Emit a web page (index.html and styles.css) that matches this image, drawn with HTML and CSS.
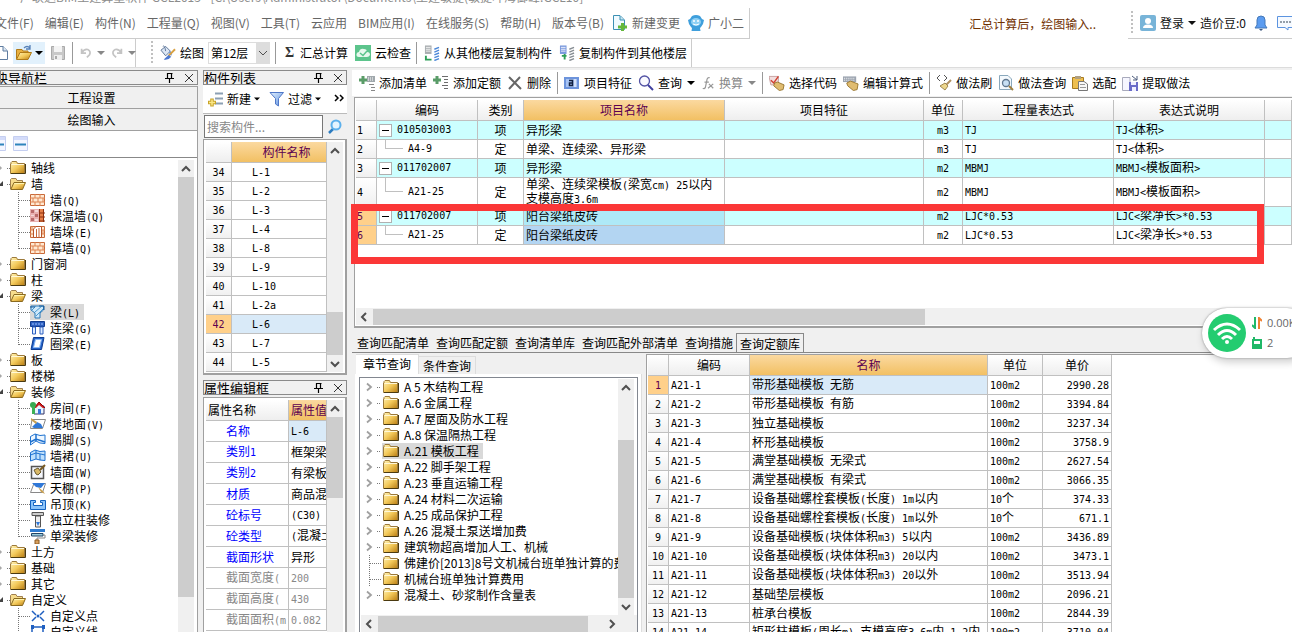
FILE: index.html
```html
<!DOCTYPE html>
<html lang="zh-CN">
<head>
<meta charset="utf-8">
<title>广联达BIM土建算量软件 GCL2013</title>
<link rel="stylesheet" href="styles.css">
</head>
<body>
<svg class="defs" aria-hidden="true">
  <defs>
    <linearGradient id="gold" x1="0" y1="0" x2="1" y2="1"><stop offset="0" stop-color="#fff3b8"/><stop offset=".5" stop-color="#f3c95a"/><stop offset="1" stop-color="#b87c12"/></linearGradient>
    <linearGradient id="blue" x1="0" y1="0" x2="1" y2="1"><stop offset="0" stop-color="#e4f2ff"/><stop offset="1" stop-color="#5a8fe0"/></linearGradient>
  </defs>
  <symbol id="i-folder" viewBox="0 0 16 16"><path d="M1 4V2.500L2 1.500H6.500L7.500 3.500H14.500V13.500H.500V4z" fill="url(#gold)" stroke="#9c7a3c"/><path d="M1.500 4.500H14" stroke="#fff8d8"/><path d="M1 13.500H15.500V4" fill="none" stroke="#4a3a10"/></symbol>
  <symbol id="i-folderopen" viewBox="0 0 16 16"><path d="M.500 13V3.500L1.500 2.500H6L7 4.500H12.500V7" fill="#f7dc8c" stroke="#a08050"/><path d="M.800 13.500L4 6.500H15.500L12.500 13.500z" fill="url(#gold)" stroke="#8a6a20"/><path d="M4.500 7.500H14" stroke="#fff4b0"/></symbol>
  <symbol id="i-closed" viewBox="0 0 10 16"><path d="M-2 5L1 8L-2 11" fill="none" stroke="#a8a8a8" stroke-width="1.500"/><path d="M7 8.500H10" stroke="#777" stroke-dasharray="1 1"/></symbol>
  <symbol id="i-opened" viewBox="0 0 10 16"><path d="M3 5V10H-2z" fill="#444"/><path d="M7 8.500H10" stroke="#777" stroke-dasharray="1 1"/></symbol>
  <symbol id="i-tee" viewBox="0 0 12 16"><path d="M.500 0V16M1 8.500H12" stroke="#777" stroke-dasharray="1 1"/></symbol>
  <symbol id="i-elbow" viewBox="0 0 12 16"><path d="M.500 0V9M1 8.500H12" stroke="#777" stroke-dasharray="1 1"/></symbol>
  <symbol id="i-more" viewBox="0 0 20 16"><path d="M6 4.500L10 8L6 11.500" fill="none" stroke="#a0a0a0" stroke-width="1.800"/><path d="M16 8.500H20" stroke="#777" stroke-dasharray="1 1"/></symbol>
  <symbol id="i-leaf" viewBox="0 0 20 16"><path d="M8.500 0V16M9 8.500H20" stroke="#777" stroke-dasharray="1 1"/></symbol>
  <symbol id="i-brick" viewBox="0 0 16 16"><path d="M.500 2.500H14.500V13.500H.500z" fill="#ffe9d2" stroke="#c86a3a"/><path d="M0 6H15M0 10H15M5 2V6M10 2V6M3 6V10M8 6V10M13 6V10M5 10V14M10 10V14" stroke="#dd8350"/></symbol>
  <symbol id="i-insul" viewBox="0 0 16 16"><path d="M0 1H9V14H0z" fill="#e8b0b0"/><path d="M1 2H4V5H1zM5 6H8V9H5zM1 10H4V13H1z" fill="#b86a6a"/><path d="M5 2H8V4H5zM1 7H4V8H1zM5 11H8V13H5z" fill="#f4dada"/><path d="M9.500 1V14M13.500 1V14" stroke="#8c3010"/><path d="M10 1H13V14H10z" fill="#e88048"/><path d="M10 5H15M10 9H15M10 13H15" stroke="#8c3010"/></symbol>
  <symbol id="i-pier" viewBox="0 0 16 16"><path d="M.500 2.500H14.500V13.500H.500z" fill="#ffe9d2" stroke="#c86a3a"/><path d="M0 6H15M0 10H15M2 2V6M13 6V10" stroke="#dd8350"/><path d="M3.500 5L6 2.500H11.500V13.500H3.500z" fill="#fff" stroke="#b8552a"/><path d="M6.500 5V14M9 4V14" stroke="#c86a3a"/></symbol>
  <symbol id="i-beam" viewBox="0 0 16 16"><path d="M1 2H13.500V6L10 9V14H5V9L1 6z" fill="#cfe8fa" stroke="#2a78b8"/><path d="M2 6L6 2M5 8L12 2M6 12L13 5" stroke="#4a9ad0"/><path d="M0 3H5M9 2H14V6" stroke="#185a98" fill="none"/></symbol>
  <symbol id="i-lbeam" viewBox="0 0 16 16"><path d="M.500 1.500H14.500V6.500H.500z" fill="#2c5fc0" stroke="#123c90"/><path d="M2 4H13" stroke="#9cc0ff" stroke-dasharray="2 1"/><path d="M2.500 7H5.500V14H2.500zM10 7H13V14H10z" fill="#dcebff" stroke="#2c5fc0"/></symbol>
  <symbol id="i-ring" viewBox="0 0 16 16"><path d="M3.500 1.500H14L11.500 13.500H1z" fill="#2563c8" stroke="#0c3a90"/><path d="M5.500 3.500H11.500L9.500 11.500H3.500z" fill="#fff" stroke="#8cb8f4"/></symbol>
  <symbol id="i-room" viewBox="0 0 16 16"><path d="M4 6H14V14H4z" fill="#e8f4ff" stroke="#336"/><path d="M4 8L9 2L15 8" fill="#cc2020" stroke="#900"/><path d="M5 9L9 5L14 9" fill="#e8f4ff"/><path d="M8 9H11V14H8z" fill="#3a78d8"/><circle cx="3" cy="5" r="3" fill="#38a850"/><path d="M2 6H5V14H2z" fill="#3cb054"/></symbol>
  <symbol id="i-floor" viewBox="0 0 16 16"><path d="M2 3.500H15.500L12.500 12.500H.500z" fill="#fff" stroke="#888"/><path d="M4 12L2 11L7 6L11 8L13 12z" fill="#2f78d8"/><path d="M1 2L7 6L6 8L1 4z" fill="#c9a050"/></symbol>
  <symbol id="i-skirt" viewBox="0 0 16 16"><path d="M.500 4.500L5 2L10 3.500L15 3V11.500L10 11L6 9L.500 13z" fill="#eef7ff" stroke="#1f72d0"/><path d="M6 2V9M.500 10L6 7L15 10" fill="none" stroke="#1f72d0" stroke-width="1.500"/></symbol>
  <symbol id="i-dado" viewBox="0 0 16 16"><path d="M.500 4.500L5 2L10 3.500L15 3V12.500L10 12L6 11L.500 13z" fill="#bfe0fc" stroke="#1f72d0"/><path d="M6 2V11M.500 7L6 5L15 7M10 6V12" fill="none" stroke="#1f72d0"/></symbol>
  <symbol id="i-wallface" viewBox="0 0 16 16"><path d="M1.500 2.500H13.500V14.500H1.500z" fill="#f4f6fb" stroke="#555" stroke-width="1.500"/><path d="M4 6L8 4L11 8L8 11L6 10z" fill="#d8b868" stroke="#6a5a30"/><path d="M10 6L15 1" stroke="#7a5a20" stroke-width="2"/></symbol>
  <symbol id="i-canopy" viewBox="0 0 16 16"><path d="M4 3.500H15.500L12.500 12.500H.500z" fill="#fff" stroke="#888"/><path d="M2 3H15L11 8L6 7z" fill="#2f78d8"/><path d="M8 7L13 11L15 14L11 12z" fill="#c9a050"/></symbol>
  <symbol id="i-ceiling" viewBox="0 0 16 16"><path d="M.500 4.500H5.500V6.500H3.500V9.500H12.500V6.500H10.500V4.500H15.500V13.500H.500z" fill="#8cc4fa" stroke="#1463c0"/></symbol>
  <symbol id="i-column" viewBox="0 0 16 16"><path d="M2 .500H13.500V3.500H2z" fill="#ccc" stroke="#555"/><path d="M5.500 4H10.500V15H5.500z" fill="#eee" stroke="#555"/><path d="M6 10H10L8 14z" fill="#2f78d8"/></symbol>
  <symbol id="i-sbeam" viewBox="0 0 16 16"><path d="M0 1H15V4H0z" fill="#2f7cd0"/><path d="M1.500 5.500H13V8H1.500z" fill="#9cd" stroke="#246"/><path d="M13 7H15V10H7V12" fill="none" stroke="#888"/><path d="M5 12H9V16H5z" fill="#d8a060" stroke="#8a5a20"/></symbol>
  <symbol id="i-pt" viewBox="0 0 16 16"><path d="M2 3L6 7M14 3L10 7M2 13L6 9M14 13L10 9" stroke="#1f5fc0" stroke-width="1.500"/><circle cx="8" cy="8" r="1.500" fill="#1f5fc0"/></symbol>
  <symbol id="i-line" viewBox="0 0 16 16"><path d="M2 3H14M2 3V14M13 3V14" stroke="#1f5fc0" stroke-width="1.500" fill="none"/><path d="M1 1H4V5H1zM12 1H15V5H12z" fill="#1f5fc0"/></symbol>
  <symbol id="i-collapse" viewBox="0 0 16 16"><path d="M.500 .500H14.500V14.500H.500z" fill="#f4f6ff" stroke="#c4cef0"/><path d="M1 1H14V4H1z" fill="#d4dcfa"/><path d="M2 8.500H13" stroke="#2e84bc" stroke-width="2"/></symbol>
  <symbol id="i-pin" viewBox="0 0 10 10"><path d="M2.500 0V5.500M2 .500H7.500M6.500 0V5.500M0 5.500H9M4.500 6V10" stroke="#000" stroke-width="1.200" fill="none"/></symbol>
  <symbol id="i-close" viewBox="0 0 10 10"><path d="M1 1L9 9M9 1L1 9" stroke="#333"/></symbol>
  <symbol id="i-drop" viewBox="0 0 8 8"><path d="M0 2H8L4 6z" fill="currentColor"/></symbol>
  <symbol id="i-up" viewBox="0 0 10 10"><path d="M1 7L5 3L9 7" fill="none" stroke="#505050" stroke-width="2"/></symbol>
  <symbol id="i-down" viewBox="0 0 10 10"><path d="M1 3L5 7L9 3" fill="none" stroke="#505050" stroke-width="2"/></symbol>
  <symbol id="i-thin" viewBox="0 0 10 10"><path d="M1 3L5 7L9 3" fill="none" stroke="#505050"/></symbol>
  <symbol id="i-left" viewBox="0 0 10 10"><path d="M7 1L3 5L7 9" fill="none" stroke="#505050" stroke-width="2"/></symbol>
  <symbol id="i-right" viewBox="0 0 10 10"><path d="M3 1L7 5L3 9" fill="none" stroke="#505050" stroke-width="2"/></symbol>
  <symbol id="i-chev" viewBox="0 0 10 10"><path d="M1 1L4 4L1 7M6 1L9 4L6 7" fill="none" stroke="#000" stroke-width="1.500"/></symbol>
  <symbol id="i-page" viewBox="0 0 16 16"><path d="M2.500 1.500H11L15.500 6V14.500H2.500z" fill="#fff" stroke="#5f7ca0"/><path d="M11 1V6H15" fill="#dde8f4" stroke="#5f7ca0"/></symbol>
  <symbol id="i-open" viewBox="0 0 18 16"><path d="M1.500 14V4.500H7L8 6H13V8" fill="#e8b040" stroke="#b07a18"/><path d="M1.500 14.500L5 7.500H16.500L13 14.500z" fill="url(#gold)" stroke="#b07a18"/><path d="M9 3Q12 0 15 3M15 0V4H11" fill="none" stroke="#5580b8" stroke-width="1.300"/></symbol>
  <symbol id="i-save" viewBox="0 0 16 16"><path d="M1.500 1.500H14.500V14.500H1.500z" fill="#c8c8c8" stroke="#aaa"/><path d="M4 1H12V7H4z" fill="#f4f4f4"/><path d="M4 10H12V15H4z" fill="#eee"/><path d="M5 11H7V14H5z" fill="#aaa"/></symbol>
  <symbol id="i-undo" viewBox="0 0 14 16"><path d="M2 3V8H7M2 8Q5 3 9 4Q13 6 11 10L8 13" fill="none" stroke="#c4c4c4" stroke-width="2"/></symbol>
  <symbol id="i-redo" viewBox="0 0 14 16"><path d="M12 3V8H7M12 8Q9 3 5 4Q1 6 3 10L6 13" fill="none" stroke="#c4c4c4" stroke-width="2"/></symbol>
  <symbol id="i-paint" viewBox="0 0 17 16"><path d="M1 5L6 1L11 6L6 11z" fill="#dce6f4" stroke="#5c7498"/><path d="M3 1Q5-1 6 6" fill="none" stroke="#5c7498"/><path d="M10 6Q14 7 12 11Q9 10 10 6" fill="#6a94dc"/><path d="M16 4L9 11" stroke="#d8a040" stroke-width="2"/><path d="M4 15L9 10L12 12Q9 16 4 15" fill="#4c78d0"/></symbol>
  <symbol id="i-cloud" viewBox="0 0 16 16"><path d="M0 0H16V16H0z" fill="#5cc48c"/><path d="M4 12Q1 12 1.500 9Q2 7 4 7Q5 3 9 4Q12 4 12 7Q15 7 15 10Q14 12 12 12z" fill="#e8f8ee"/><path d="M5 8L8 10.500L12 6" fill="none" stroke="#5cc48c" stroke-width="1.500"/></symbol>
  <symbol id="i-copyfrom" viewBox="0 0 17 16"><path d="M1 0H8V9H1z" fill="#a8adb0"/><path d="M2 2H7M2 4H7M2 6H7" stroke="#f4f4f4"/><path d="M2 11V15H8" fill="none" stroke="#2e9e58" stroke-width="2"/><path d="M11 4L16 2M11 7L16 5M11 10L16 8M11 13L16 11M11 16L16 14" stroke="#4c88d8" stroke-width="1.500"/></symbol>
  <symbol id="i-copyto" viewBox="0 0 17 16"><path d="M1 0H8V9H1z" fill="#7898dc"/><path d="M2 2H7M2 4H7M2 6H7" stroke="#f4f4ff"/><path d="M3 11H8M6 9V15" stroke="#2e9e58" stroke-width="2"/><path d="M11 4L16 2M11 7L16 5M11 10L16 8M11 13L16 11M11 16L16 14" stroke="#888e94" stroke-width="1.500"/></symbol>
  <symbol id="i-addlist" viewBox="0 0 16 16"><path d="M0 5H8M4 1V9" stroke="#5a9c68" stroke-width="3"/><path d="M8 1H16V7H8z" fill="#a0a8ac"/><path d="M9 3H15M9 5H15" stroke="#fff" stroke-dasharray="1 1"/><path d="M10 9.500H15M12 12.500H16M12 15.500H16" stroke="#888"/></symbol>
  <symbol id="i-addquota" viewBox="0 0 16 16"><path d="M0 5H8M4 1V9" stroke="#5a9c68" stroke-width="3"/><path d="M9 1.500H15M11 4.500H15M11 7.500H15M9 10.500H15M11 13.500H15" stroke="#6c6c6c"/></symbol>
  <symbol id="i-del" viewBox="0 0 16 16"><path d="M2 2L14 14M13 2L2 14" stroke="#666" stroke-width="2"/></symbol>
  <symbol id="i-feature" viewBox="0 0 16 16"><path d="M0 2H15V14H0z" fill="#6d94dc"/><path d="M2 4H13V12H2z" fill="#a8c4f4"/><path d="M5 5.500H8.500V10.500H5.500V8H8" fill="none" stroke="#102040" stroke-width="1.500"/><path d="M11 4V12" stroke="#fff"/></symbol>
  <symbol id="i-search" viewBox="0 0 16 16"><circle cx="6.500" cy="6" r="5" fill="#fafaff" stroke="#5252a4" stroke-width="1.300"/><path d="M10 10L15 15" stroke="#4040a0" stroke-width="2"/></symbol>
  <symbol id="i-fx" viewBox="0 0 14 16"><path d="M9 2Q6 1 5.500 6L4 13Q3 15 1 14M3 7H8M8 9L13 14M13 9L7 14" fill="none" stroke="#999" stroke-width="1.400"/></symbol>
  <symbol id="i-pick" viewBox="0 0 17 16"><path d="M0 1H10V10H2z" fill="#f2dede" stroke="#c8a0a0"/><path d="M2 5L5 8L10 1" fill="none" stroke="#d04030" stroke-width="1.500"/><path d="M6 8L9 7L16 10L15 15L11 16L5 11z" fill="#e0bc70" stroke="#9a7830"/></symbol>
  <symbol id="i-edit" viewBox="0 0 17 16"><path d="M0 1H14V7H0z" fill="#9ca4b0"/><path d="M1 3H13M1 5H13" stroke="#fff" stroke-dasharray="1 1"/><path d="M4 8L8 6L16 9L15 15L11 16L5 11z" fill="#e0bc70" stroke="#9a7830"/></symbol>
  <symbol id="i-brush" viewBox="0 0 16 16"><path d="M4 0L1 3L4 6M8 0L11 3L8 6" fill="none" stroke="#555"/><path d="M15 5L10 10" stroke="#b09060" stroke-width="2"/><path d="M4 11L9 8L12 11L9 15z" fill="#ecd68c" stroke="#a08850"/></symbol>
  <symbol id="i-pagefind" viewBox="0 0 16 16"><path d="M1.500 .500H10L13.500 4V14.500H1.500z" fill="#f4f9fd" stroke="#8aa8bc"/><circle cx="8" cy="8" r="3.500" fill="#c8e0f4" stroke="#607890" stroke-width="1.300"/><path d="M11 11L15 15" stroke="#a08040" stroke-width="2"/></symbol>
  <symbol id="i-match" viewBox="0 0 16 16"><path d="M.500 2.500H11.500V13.500H.500z" fill="#eebf50" stroke="#a87c20"/><path d="M3 1H9V4H3z" fill="#b0a080"/><path d="M6.500 6.500H12L15.500 9V15.500H6.500z" fill="#f8f8f8" stroke="#777"/><path d="M8 9.500H13M8 12.500H14" stroke="#999"/></symbol>
  <symbol id="i-extract" viewBox="0 0 16 16"><path d="M.500 2.500H8V15.500H.500z" fill="#f6f6ff" stroke="#a8aabc"/><path d="M7 7H16V16H7z" fill="#6a6cc8"/><path d="M9 7H14V10H9zM10 12H14V16H10z" fill="#f0f0ff"/><path d="M10 1L15 5M15 1V5H11" fill="none" stroke="#4c5c7c"/></symbol>
  <symbol id="i-newchange" viewBox="0 0 16 16"><path d="M1.500 .500H8L12.500 5V14.500H1.500z" fill="#f0faff" stroke="#3c90b4"/><path d="M8 1V5H12" fill="#c8e8f4" stroke="#3c90b4"/><path d="M6 12H15M10.500 8V16" stroke="#64b83c" stroke-width="3"/></symbol>
  <symbol id="i-robot" viewBox="0 0 16 16"><path d="M4 1Q8 -1 12 1L14 4L16 5L15 9L13 12L12 13L12.500 16H3.500L4 13L3 12L1 9L0 5L2 4z" fill="#3f9fdc"/><ellipse cx="8" cy="7" rx="5" ry="4" fill="#8fd0f4"/><circle cx="6" cy="6" r="1" fill="#fff"/><circle cx="10" cy="6" r="1" fill="#fff"/><path d="M5 9Q8 11 11 9" fill="none" stroke="#fff"/></symbol>
  <symbol id="i-user" viewBox="0 0 16 16"><rect width="16" height="16" rx="2" fill="#78b4d8"/><circle cx="8" cy="6" r="3" fill="#fff"/><path d="M3 13Q3 9.500 8 9.500Q13 9.500 13 13z" fill="#fff"/></symbol>
  <symbol id="i-bell" viewBox="0 0 16 16"><path d="M4 10V5Q4 1 8 1Q12 1 12 5V10L14 13H2z" fill="#5c9cf0" stroke="#4478b8"/><path d="M6 14H10L8 16z" fill="#3c5880"/></symbol>
  <symbol id="i-chat" viewBox="0 0 18 16"><path d="M1.500 1.500H16.500V12.500H12V15L9 12.500H1.500z" fill="#f6faff" stroke="#5c94e0"/><path d="M4 7H15" stroke="#345" stroke-dasharray="2 1"/></symbol>
  <symbol id="i-newitem" viewBox="0 0 16 16"><path d="M7 2.500H15M7 7.500H15M7 12.500H15" stroke="#8ca0b4" stroke-width="2"/><path d="M0 11.500H8M4 7.500V15.500" stroke="#c8a428" stroke-width="3.500"/><path d="M1 11.500H7M4 8.500V14.500" stroke="#fae888" stroke-width="1.500"/></symbol>
  <symbol id="i-filter" viewBox="0 0 16 16"><path d="M1 1.500H14.500L9.500 7.500V15L6.500 13V7.500z" fill="url(#blue)" stroke="#5078c8"/></symbol>
  <symbol id="i-find" viewBox="0 0 16 16"><path d="M6 10L2 14" stroke="#2c7cc0" stroke-width="2.500"/><circle cx="9" cy="6" r="4.500" fill="#e4f4ff" stroke="#5cb0ec" stroke-width="2"/></symbol>
</svg>

<header>
  <div class="titlebar">广联达BIM土建算量软件 GCL2013 - [C:\Users\Administrator\Documents\土建敏捷(敏捷叶海御峰.GCL10]</div>
  <div class="menurow">
    <nav class="menu">
      <button>文件(F)</button><button>编辑(E)</button><button>构件(N)</button><button>工程量(Q)</button><button>视图(V)</button><button>工具(T)</button><button>云应用</button><button>BIM应用(I)</button><button>在线服务(S)</button><button>帮助(H)</button><button>版本号(B)</button>
      <button class="tb last"><svg class="i16"><use href="#i-newchange"/></svg>新建变更</button><button class="tb last"><svg class="i16"><use href="#i-robot"/></svg>广小二</button>
    </nav>
    <p class="notice">汇总计算后，绘图输入..</p>
    <div class="account">
      <span class="grip"></span>
      <button class="tb"><svg class="i16"><use href="#i-user"/></svg>登录<svg class="i8"><use href="#i-drop"/></svg></button>
      <span>造价豆:0</span>
      <button aria-label="通知"><svg class="i16"><use href="#i-bell"/></svg></button>
      <button aria-label="消息"><svg class="i18"><use href="#i-chat"/></svg></button>
    </div>
  </div>
  <div class="toolrow">
    <div class="files">
      <button aria-label="新建"><svg class="i16"><use href="#i-page"/></svg></button>
      <button class="hot" aria-label="打开"><svg class="i18"><use href="#i-open"/></svg><svg class="i8"><use href="#i-drop"/></svg></button>
      <button aria-label="保存"><svg class="i16"><use href="#i-save"/></svg></button>
      <span class="sep"></span>
      <button class="off" aria-label="撤销"><svg class="i14"><use href="#i-undo"/></svg><svg class="i8"><use href="#i-drop"/></svg></button>
      <button class="off" aria-label="恢复"><svg class="i14"><use href="#i-redo"/></svg><svg class="i8"><use href="#i-drop"/></svg></button>
    </div>
    <div class="draw">
      <span class="grip"></span>
      <button class="tb"><svg class="i16"><use href="#i-paint"/></svg>绘图</button>
      <div class="combo"><select aria-label="楼层"><option>第12层</option></select><svg class="i14"><use href="#i-thin"/></svg></div>
      <span class="sep"></span>
      <button class="tb"><b class="sigma">Σ</b>汇总计算</button>
      <button class="tb"><svg class="i16"><use href="#i-cloud"/></svg>云检查</button>
      <span class="sep"></span>
      <button class="tb"><svg class="i16"><use href="#i-copyfrom"/></svg>从其他楼层复制构件</button>
      <button class="tb"><svg class="i16"><use href="#i-copyto"/></svg>复制构件到其他楼层</button>
    </div>
  </div>
</header>

<main>
  <section class="nav">
    <h2 class="cap"><span class="cut">模块导航栏</span><svg class="i10"><use href="#i-pin"/></svg><svg class="i10"><use href="#i-close"/></svg></h2>
    <div class="navbody">
      <button class="wide">工程设置</button>
      <button class="wide">绘图输入</button>
      <div class="navtools"><button aria-label="展开"><svg class="i16"><use href="#i-collapse"/></svg></button><button aria-label="折叠"><svg class="i16"><use href="#i-collapse"/></svg></button></div>
      <div class="treebox">
        <ul class="tree" id="navtree"></ul>
        <div class="vbar"><svg class="i10"><use href="#i-up"/></svg><i class="thumb nav-thumb"></i></div>
      </div>
    </div>
  </section>

  <section class="parts">
    <div class="panel list">
      <h2 class="cap"><span>构件列表</span><svg class="i10"><use href="#i-pin"/></svg><svg class="i10"><use href="#i-close"/></svg></h2>
      <div class="parttools">
        <button class="tb"><svg class="i16"><use href="#i-newitem"/></svg>新建<svg class="i6"><use href="#i-drop"/></svg></button>
        <button class="tb"><svg class="i16"><use href="#i-filter"/></svg>过滤<svg class="i6"><use href="#i-drop"/></svg></button>
        <button class="chev" aria-label="更多"><svg class="i10"><use href="#i-chev"/></svg></button>
      </div>
      <div class="find"><input type="text" placeholder="搜索构件..." aria-label="搜索构件"><button aria-label="搜索"><svg class="i16"><use href="#i-find"/></svg></button></div>
      <div class="frame">
        <table class="grid" id="parts"><colgroup><col class="w26"><col></colgroup><thead><tr><th></th><th class="gold right">构件名称</th></tr></thead><tbody></tbody></table>
        <div class="vbar"><svg class="i10"><use href="#i-up"/></svg><i class="gap"></i><i class="thumb part-thumb"></i><svg class="i10"><use href="#i-down"/></svg></div>
      </div>
    </div>
    <div class="panel props">
      <h2 class="cap"><span>属性编辑框</span><svg class="i10"><use href="#i-pin"/></svg><svg class="i10"><use href="#i-close"/></svg></h2>
      <div class="frame">
        <table class="grid" id="props"><colgroup><col class="w83"><col></colgroup><thead><tr><th class="start">属性名称</th><th class="gold start">属性值</th></tr></thead><tbody></tbody></table>
        <div class="vbar"><svg class="i10"><use href="#i-up"/></svg><i class="thumb prop-thumb"></i></div>
      </div>
    </div>
  </section>

  <section class="work">
    <div class="worktools">
      <button class="tb"><svg class="i16"><use href="#i-addlist"/></svg>添加清单</button>
      <button class="tb"><svg class="i16"><use href="#i-addquota"/></svg>添加定额</button>
      <button class="tb"><svg class="i16"><use href="#i-del"/></svg>删除</button>
      <span class="sep"></span>
      <button class="tb"><svg class="i16"><use href="#i-feature"/></svg>项目特征</button>
      <button class="tb"><svg class="i16"><use href="#i-search"/></svg>查询<svg class="i8"><use href="#i-drop"/></svg></button>
      <button class="tb off"><svg class="i14"><use href="#i-fx"/></svg>换算<svg class="i8"><use href="#i-drop"/></svg></button>
      <span class="sep"></span>
      <button class="tb"><svg class="i16"><use href="#i-pick"/></svg>选择代码</button>
      <button class="tb"><svg class="i16"><use href="#i-edit"/></svg>编辑计算式</button>
      <span class="sep"></span>
      <button class="tb"><svg class="i16"><use href="#i-brush"/></svg>做法刷</button>
      <button class="tb"><svg class="i16"><use href="#i-pagefind"/></svg>做法查询</button>
      <button class="tb"><svg class="i16"><use href="#i-match"/></svg>选配</button>
      <button class="tb"><svg class="i16"><use href="#i-extract"/></svg>提取做法</button>
    </div>
    <div class="bill">
      <table class="grid" id="bill">
        <colgroup><col class="w21"><col class="w101"><col class="w46"><col class="w201"><col class="w199"><col class="w39"><col class="w151"><col class="w151"><col></colgroup>
        <thead><tr><th></th><th>编码</th><th>类别</th><th class="gold">项目名称</th><th>项目特征</th><th>单位</th><th>工程量表达式</th><th>表达式说明</th><th></th></tr></thead>
        <tbody></tbody>
      </table>
      <div class="hbar"><svg class="i10"><use href="#i-left"/></svg><i class="thumb bill-thumb"></i></div>
      <div class="marker"></div>
    </div>
    <nav class="tabs"><button>查询匹配清单</button><button>查询匹配定额</button><button>查询清单库</button><button>查询匹配外部清单</button><button>查询措施</button><button class="on">查询定额库</button></nav>
    <div class="lookup">
      <div class="chapters">
        <nav class="subtabs"><button class="on">章节查询</button><button>条件查询</button></nav>
        <div class="page">
          <div class="scroller">
            <div class="treebox"><ul class="tree" id="chapters"></ul>
              <div class="vbar"><svg class="i10"><use href="#i-up"/></svg><i class="gap"></i><i class="thumb chap-thumb"></i><svg class="i10"><use href="#i-down"/></svg></div></div>
            <div class="hbar"><svg class="i10"><use href="#i-left"/></svg><i class="thumb chap-h"></i><i class="gap"></i><svg class="i10"><use href="#i-right"/></svg></div>
          </div>
        </div>
      </div>
      <div class="quota">
        <table class="grid" id="quota"><colgroup><col class="w21"><col class="w81"><col class="w238"><col class="w55"><col class="w69"></colgroup>
          <thead><tr><th></th><th>编码</th><th class="gold">名称</th><th>单位</th><th>单价</th></tr></thead><tbody></tbody></table>
      </div>
    </div>
  </section>
</main>

<aside class="wifi">
  <svg class="wifi-icon" viewBox="0 0 38 38"><circle cx="19" cy="19" r="19" fill="#24cc70"/><g fill="none" stroke="#fff" stroke-width="3"><path d="M6 16Q19 4 32 16"/><path d="M10 21Q19 12 28 21"/><path d="M14 25Q19 20 24 25"/></g><circle cx="19" cy="28" r="2" fill="#fff"/></svg>
  <div class="stats">
    <span><svg class="i10" viewBox="0 0 10 12"><path d="M3 0V11L0 8" fill="none" stroke="#20b868" stroke-width="2"/><path d="M7 12V1L10 4" fill="none" stroke="#f08030" stroke-width="2"/></svg>0.00K/s</span>
    <span><svg class="i10" viewBox="0 0 10 12"><path d="M1 3H9V11H1z" fill="#fff" stroke="#20b868" stroke-width="2"/><path d="M1 7H9V11H1zM1 0H3V3H1z" fill="#20b868"/></svg>2</span>
  </div>
</aside>
<script src="app.js"></script>
</body>
</html>
```

FILE: styles.css
```css
* { box-sizing: border-box; }
body { margin: 0; height: 100vh; overflow: hidden; display: flex; flex-direction: column; background: #f0f0f0; color: #000; font: 12px/16px "Noto Sans CJK SC", sans-serif; white-space: nowrap; }
button, input, select { font: inherit; color: inherit; border: 0; padding: 0; margin: 0; background: none; border-radius: 0; }
button { display: flex; align-items: center; flex: none; }
h2, p, ul { margin: 0; padding: 0; font-weight: normal; list-style: none; }
svg { flex: none; display: block; }
.defs { position: absolute; width: 0; height: 0; }
.i6 { width: 6px; height: 6px; }
.i8 { width: 8px; height: 8px; }
.i10 { width: 10px; height: 10px; }
.i12 { width: 12px; height: 16px; }
.i14 { width: 14px; height: 14px; }
.i16 { width: 16px; height: 16px; }
.i18 { width: 18px; height: 16px; }
.i20 { width: 20px; height: 16px; }
.latin { font: 10px/12px "DejaVu Sans Mono", monospace; white-space: pre; }
.tb { gap: 4px; }
.tb .i6, .tb .i8 { margin-left: 1px; }
.off { color: #888; }
.sep { width: 1px; height: 22px; background: #999; flex: none; }
.grip { width: 2px; height: 24px; flex: none; background: repeating-linear-gradient(#c0c0c0 0 2px, #fff 2px 4px); }

header { flex: none; background: #fff; border-bottom: 1px solid #dcdcdc; }
.titlebar { height: 8px; padding: 0 20px 1px; overflow: hidden; display: flex; align-items: flex-end; font-size: 12px; line-height: 20px; color: #8c8c8c; }
.menurow { display: flex; height: 31px; align-items: stretch; color: #666; }
.menu { display: flex; align-items: center; gap: 11px; flex: none; border: solid #ccc; border-width: 0 1px 1px 0; padding-right: 5px; margin-left: -5px; }
.menu .last { margin-left: -3px; }
.notice { flex: 1; text-align: right; line-height: 31px; color: #703000; padding-right: 32px; }
.account { display: flex; align-items: center; gap: 7px; width: 164px; padding-left: 3px; flex: none; border-bottom: 1px solid #ccc; color: #111; overflow: hidden; }
.account .tb { margin-right: -6px; }
.account .tb .i8 { margin: 0 3px 0 0; }
.toolrow { display: flex; height: 28px; }
.files, .draw { display: flex; align-items: center; flex: none; border-right: 1px solid #ccc; }
.files { gap: 5px; margin-left: -8px; padding-right: 2px; width: 144px; }
.files .off { gap: 4px; }
.files .sep { margin: 0 1px; }
.hot { background: #e2f1fc; height: 22px; gap: 2px; padding: 0 2px; }
.draw { gap: 7px; padding: 0 4px 0 15px; }
.draw .sep { margin-left: -2px; }
.combo { display: grid; width: 62px; height: 22px; margin-left: -3px; }
.combo select, .combo svg { grid-area: 1 / 1; }
.combo select { appearance: none; border: 1px solid #ddd; padding-left: 2px; background: linear-gradient(#ddd, #ddd) right / 13px 100% no-repeat; outline: 0; }
.combo svg { justify-self: end; align-self: center; width: 10px; height: 10px; margin-right: 2px; }
.sigma { width: 13px; text-align: center; font: bold 14px "Liberation Serif", serif; color: #333; }

main { flex: 1; min-height: 0; display: grid; grid-template-columns: 198px 144px 1fr; column-gap: 5px; padding-top: 2px; }
.cap { display: flex; align-items: center; height: 15px; border: 1px solid #8a8a8a; padding-right: 3px; gap: 9px; font-size: 13px; line-height: 13px; overflow: hidden; flex: none; }
.cap span { flex: 1; }
.cap .cut { margin-left: -19px; }
.nav, .parts, .work, .panel { display: flex; flex-direction: column; min-width: 0; min-height: 0; }
.navbody { flex: 1; min-height: 0; display: flex; flex-direction: column; margin-top: 1px; border: 1px solid #a0a0a0; border-left: 0; border-bottom: 0; }
.wide { height: 22px; justify-content: center; border-bottom: 1px solid #a0a0a0; padding-right: 14px; }
.navtools { display: flex; gap: 6px; height: 27px; align-items: center; background: #fff; margin-left: -9px; border-bottom: 1px solid #888; flex: none; }
.treebox { flex: 1; min-height: 0; display: flex; background: #fff; overflow: hidden; padding: 2px 2px 0 0; }
.tree { flex: 1; min-width: 0; overflow: hidden; }
.tree li { display: flex; align-items: center; height: 16px; gap: 5px; }
.tree li > svg:first-child { margin-right: -5px; height: 16px; }
.tree .sub { padding-left: 18px; gap: 0; }
.tree .sub > svg:first-child { margin: 0; }
.tree .label { display: flex; align-items: center; gap: 4px; height: 16px; padding-right: 4px; }
.sel { background: #d9d9d9; }
.vbar { width: 17px; flex: none; background: #f0f0f0; display: flex; flex-direction: column; align-items: center; border-right: 1px solid #fff; }
.vbar .i10 { margin: 4px 0 3px; }
.hbar { height: 17px; flex: none; background: #f0f0f0; display: flex; align-items: center; }
.hbar .i10 { margin: 0 4px 0 3px; }
.thumb { background: #cdcdcd; }
.vbar .thumb { width: 100%; }
.hbar .thumb { height: 16px; }
.gap { flex: 1; }
.nav-thumb { height: 89%; }

.parts { gap: 5px; }
.list { flex: none; }
.props { flex: 1; }
.parttools { display: flex; gap: 9px; height: 28px; align-items: center; background: #fff; padding-left: 5px; }
.parttools .tb { gap: 3px; }
.parttools .tb .i6 { margin: 0; }
.chev { flex: 1; justify-content: flex-end; padding-right: 3px; height: 18px; }
.find { display: flex; height: 26px; border-top: 1px solid #bbb; background: #f0f0f0; padding: 1px 0 1px 1px; }
.find input { flex: 1; min-width: 0; border: 1px solid #777; background: #fff; padding: 0 2px; font-size: 12px; outline: 0; }
.find input::placeholder { color: #888; }
.find button { width: 24px; justify-content: center; }
.frame { display: flex; border: 1px solid #a0a0a0; border-right-width: 2px; padding: 2px 1px 1px 2px; background: #fff; min-height: 0; overflow: hidden; }
.list .frame { border-bottom-width: 2px; }
.props .frame { flex: 1; margin-top: 2px; padding-bottom: 0; border-bottom: 0; align-items: flex-start; }
.props .vbar { align-self: stretch; }
.part-thumb { height: 43px; }
.prop-thumb { height: 81px; }

.grid { border-spacing: 0; table-layout: fixed; width: 100%; }
.frame .grid { flex: 1; width: 0; }
.grid th, .grid td { padding: 0 2px; height: 19px; line-height: 12px; border: solid #c0c0c0; border-width: 0 1px 1px 0; overflow: hidden; font-weight: normal; text-align: left; }
.grid th { height: 21px; text-align: center; background: linear-gradient(#fff, #eee); }
.grid th.gold { background: linear-gradient(#fbd9a0, #f2c063); color: #5c0050; }
.grid th.start { text-align: left; }
.grid th.right { padding-left: 17px; }
.grid .num { background: linear-gradient(#fff, #f0f0f0); text-align: center; padding: 0 1px; }
.grid .num.on { background: #ffd08a; color: #5c0050; }
.grid .mid { text-align: center; }
.grid .end { text-align: right; }
.grid .pick { background: #d9eaf8; }
.w21 { width: 21px; } .w26 { width: 26px; } .w39 { width: 39px; } .w46 { width: 46px; } .w55 { width: 55px; } .w69 { width: 69px; }
.w81 { width: 81px; } .w83 { width: 83px; } .w101 { width: 101px; } .w151 { width: 151px; } .w199 { width: 199px; } .w201 { width: 201px; } .w238 { width: 238px; }
#parts .name { padding-left: 20px; }
#props td { height: 21px; }
#props .key { color: #00f; padding-left: 20px; }
#props .dim td { color: #888; }
#bill .num { text-align: left; }
#bill .item td { background: #cff; }
#bill .item .num { background: linear-gradient(#fff, #f0f0f0); }
#bill tr .num.on { background: #ffd08a; }
#bill .item .name.hit { background: #aee9f7; }
#bill .name.hit { background: #b3d5f2; }
#bill .tall td { height: 29px; }
.code { display: flex; align-items: center; height: 18px; gap: 5px; }
.tall .code { height: 28px; }
.box { width: 13px; height: 13px; border: 1px solid #b0b0b0; background: #fff; justify-content: center; }
.box::before { content: ""; width: 7px; height: 1px; background: #000; }
.conn { width: 18px; height: 50%; align-self: flex-start; margin-left: 6px; border: solid #c0c0c0; border-width: 0 0 1px 1px; }

.worktools { display: flex; align-items: center; gap: 6px; height: 26px; flex: none; background: #fff; padding-left: 7px; overflow: hidden; }
.bill { position: relative; height: 231px; flex: none; display: flex; flex-direction: column; justify-content: space-between; margin-left: 2px; border: 1px solid #a0a0a0; border-right: 0; border-bottom-width: 2px; padding: 2px 0 1px 1px; margin-top: 1px; background: #fff; }
.bill-thumb { width: 59%; }
.marker { position: absolute; left: -4px; top: 106px; right: 28px; height: 60px; border: 7px solid #fb3737; }
.tabs { display: flex; height: 25px; flex: none; gap: 7px; padding: 5px 0 0 5px; border-bottom: 1px solid #888; }
.tabs .on { border: 1px solid #888; border-bottom: 0; padding: 2px 3px 0; margin-left: -4px; }
.lookup { flex: 1; min-height: 0; display: grid; grid-template-columns: 287px 1fr; column-gap: 4px; padding: 1px 0 0 3px; }
.chapters { display: flex; flex-direction: column; min-height: 0; }
.subtabs { display: flex; height: 20px; align-items: flex-end; padding-left: 1px; }
.subtabs button { height: 18px; padding: 0 4px; border: solid #ddd; border-width: 1px 1px 0 0; }
.subtabs .on { height: 20px; padding: 0 7px 2px; background: #fff; }
.page { flex: 1; min-height: 0; background: #fff; padding: 3px 3px 0 4px; border-right: 1px solid #ddd; display: flex; }
.scroller { flex: 1; min-width: 0; display: flex; flex-direction: column; border: 1px solid #828790; border-bottom: 0; padding-left: 1px; }
.scroller .treebox { padding-top: 1px; }
#chapters li > svg:first-child { margin-right: -4px; }
#chapters .label { padding-left: 1px; gap: 5px; }
.chap-thumb { height: 158px; }
.chap-h { width: 210px; }
.chapters .hbar .gap + .i10 { margin-right: 20px; }
.quota { border: solid #a0a0a0; border-width: 1px 0 0 1px; background: #fff; padding-left: 1px; overflow: hidden; }
#quota { width: 464px; }

.wifi { position: absolute; right: -20px; top: 308px; width: 110px; height: 50px; border-radius: 25px; background: #fff; box-shadow: 0 0 2px #888, 2px 4px 8px #0003; display: flex; align-items: center; gap: 6px; padding-left: 6px; overflow: hidden; }
.wifi-icon { width: 38px; height: 38px; }
.stats { display: flex; flex-direction: column; gap: 4px; font: 11px/16px "Open Sans", sans-serif; color: #666; }
.stats span { display: flex; align-items: center; gap: 5px; }
.stats svg { height: 12px; }
```

FILE: app.js
```js
const esc = s => s.replace(/&/g, '&amp;').replace(/</g, '&lt;').replace(/>/g, '&gt;');
const text = s => s.replace(/[\x20-\x7e]+|\n/g, run =>
  run === '\n' ? '<br>' : `<span class="latin">${esc(run)}</span>`);
const icon = (name, size) => `<svg class="i${size}"><use href="#i-${name}"/></svg>`;
const body = id => document.querySelector(`#${id} tbody`);

const groups = [
  ['轴线'],
  ['墙', [['brick', '墙(Q)'], ['insul', '保温墙(Q)'], ['pier', '墙垛(E)'], ['brick', '幕墙(Q)']]],
  ['门窗洞'], ['柱'],
  ['梁', [['beam', '梁(L)'], ['lbeam', '连梁(G)'], ['ring', '圈梁(E)']]],
  ['板'], ['楼梯'],
  ['装修', [['room', '房间(F)'], ['floor', '楼地面(V)'], ['skirt', '踢脚(S)'], ['dado', '墙裙(U)'], ['wallface', '墙面(W)'], ['canopy', '天棚(P)'], ['ceiling', '吊顶(K)'], ['column', '独立柱装修'], ['sbeam', '单梁装修']]],
  ['土方'], ['基础'], ['其它'],
  ['自定义', [['pt', '自定义点'], ['line', '自定义线']]]
];
document.getElementById('navtree').innerHTML = groups.map(([name, kids]) =>
  `<li>${icon(kids ? 'opened' : 'closed', 10)}${icon(kids ? 'folderopen' : 'folder', 16)}<span>${name}</span></li>` +
  (kids || []).map(([ic, label], i) =>
    `<li class="sub">${icon(i < kids.length - 1 ? 'tee' : 'elbow', 12)}<span class="label${label === '梁(L)' ? ' sel' : ''}">${icon(ic, 16)}<span>${text(label)}</span></span></li>`).join('')
).join('');

const chapters = ['A 5 木结构工程', 'A.6 金属工程', 'A.7 屋面及防水工程', 'A.8 保温隔热工程', 'A.21 模板工程', 'A.22 脚手架工程', 'A.23 垂直运输工程', 'A.24 材料二次运输', 'A.25 成品保护工程', 'A.26 混凝土泵送增加费', '建筑物超高增加人工、机械', '佛建价[2013]8号文机械台班单独计算的费用', '机械台班单独计算费用', '混凝土、砂浆制作含量表'];
document.getElementById('chapters').innerHTML = chapters.map((c, i) =>
  `<li>${icon(i === 11 || i === 12 ? 'leaf' : 'more', 20)}<span class="label${i === 4 ? ' sel' : ''}">${icon('folder', 16)}${c}</span></li>`).join('');

body('parts').innerHTML = ['L-1', 'L-2', 'L-3', 'L-4', 'L-8', 'L-9', 'L-10', 'L-2a', 'L-6', 'L-7', 'L-5'].map((n, i) => {
  const on = n === 'L-6';
  return `<tr><td class="num${on ? ' on' : ''}">${text(String(34 + i))}</td><td class="name${on ? ' pick' : ''}">${text(n)}</td></tr>`;
}).join('');

body('props').innerHTML = [['名称', 'L-6'], ['类别1', '框架梁'], ['类别2', '有梁板'], ['材质', '商品混凝土'], ['砼标号', '(C30)'], ['砼类型', '(混凝土)'], ['截面形状', '异形'], ['截面宽度(', '200'], ['截面高度(', '430'], ['截面面积(m', '0.082']].map(([k, v], i) =>
  `<tr class="${i > 6 ? 'dim' : ''}"><td class="key">${text(k)}</td><td class="${i ? '' : 'pick'}">${text(v)}</td></tr>`).join('');

const bill = [
  ['010503003', '异形梁', 'm3', 'TJ', 'TJ<体积>'],
  ['A4-9', '单梁、连续梁、异形梁', 'm3', 'TJ', 'TJ<体积>'],
  ['011702007', '异形梁', 'm2', 'MBMJ', 'MBMJ<模板面积>'],
  ['A21-25', '单梁、连续梁模板(梁宽cm) 25以内\n支模高度3.6m', 'm2', 'MBMJ', 'MBMJ<模板面积>'],
  ['011702007', '阳台梁纸皮砖', 'm2', 'LJC*0.53', 'LJC<梁净长>*0.53'],
  ['A21-25', '阳台梁纸皮砖', 'm2', 'LJC*0.53', 'LJC<梁净长>*0.53']
];
body('bill').innerHTML = bill.map(([code, name, unit, expr, note], i) => {
  const item = i % 2 === 0, on = i > 3;
  const lead = item ? '<button class="box" aria-label="折叠"></button>' : '<i class="conn"></i>';
  return `<tr class="${item ? 'item' : ''}${i === 3 ? 'tall' : ''}"><td class="num${on ? ' on' : ''}">${text(String(i + 1))}</td>` +
    `<td><div class="code">${lead}${text(code)}</div></td><td class="mid">${item ? '项' : '定'}</td>` +
    `<td class="name${on ? ' hit' : ''}">${text(name)}</td><td></td><td class="mid">${text(unit)}</td><td>${text(expr)}</td><td>${text(note)}</td><td></td></tr>`;
}).join('');

const quota = [
  ['带形基础模板 无筋', '2990.28'], ['带形基础模板 有筋', '3394.84'], ['独立基础模板', '3237.34'], ['杯形基础模板', '3758.9'],
  ['满堂基础模板 无梁式', '2627.54'], ['满堂基础模板 有梁式', '3066.35'], ['设备基础螺栓套模板(长度) 1m以内', '374.33', '10个'],
  ['设备基础螺栓套模板(长度) 1m以外', '671.1', '10个'], ['设备基础模板(块体体积m3) 5以内', '3436.89'], ['设备基础模板(块体体积m3) 20以内', '3473.1'],
  ['设备基础模板(块体体积m3) 20以外', '3513.94'], ['基础垫层模板', '2096.21'], ['桩承台模板', '2844.39'], ['矩形柱模板(周长m) 支模高度3.6m内 1.2内', '3710.04']
];
body('quota').innerHTML = quota.map(([name, price, unit], i) =>
  `<tr><td class="num${i ? '' : ' on'}">${text(String(i + 1))}</td><td>${text('A21-' + (i + 1))}</td><td class="${i ? '' : 'pick'}">${text(name)}</td><td>${text(unit || '100m2')}</td><td class="end">${text(price)}</td></tr>`).join('');
```
